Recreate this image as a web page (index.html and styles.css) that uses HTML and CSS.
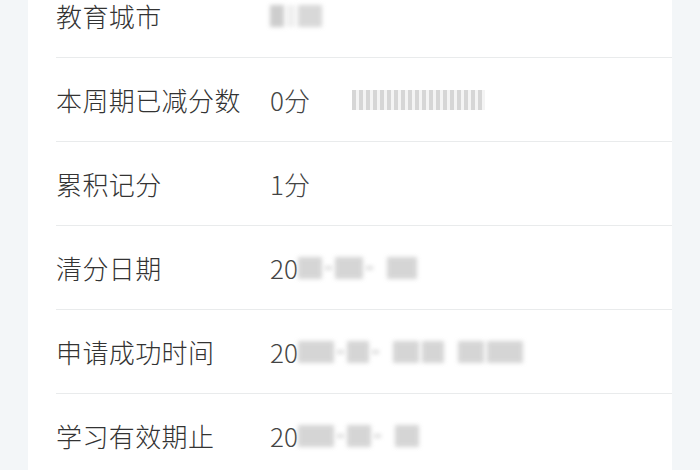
FILE: index.html
```html
<!DOCTYPE html>
<html lang="zh-CN">
<head>
<meta charset="utf-8">
<link rel="stylesheet" href="styles.css">
</head>
<body>
<div class="page">
  <div class="card">
    <div class="list">
      <div class="row">
        <div class="label">教育城市</div>
        <div class="value"><span class="mask"><i class="b b1"></i><i class="b b2"></i><i class="b b3"></i></span></div>
      </div>
      <div class="row">
        <div class="label">本周期已减分数</div>
        <div class="value">0分<span class="stripes"></span></div>
      </div>
      <div class="row">
        <div class="label">累积记分</div>
        <div class="value">1分</div>
      </div>
      <div class="row">
        <div class="label">清分日期</div>
        <div class="value">20<span class="mask"><i class="b s24"></i><i class="b sdash"></i><i class="b s28"></i><i class="b sdash"></i><i class="b gap"></i><i class="b s30"></i></span></div>
      </div>
      <div class="row">
        <div class="label">申请成功时间</div>
        <div class="value">20<span class="mask"><i class="b s36"></i><i class="b sdash"></i><i class="b s22"></i><i class="b sdash"></i><i class="b gap"></i><i class="b s26"></i><i class="b s22"></i><i class="b gap"></i><i class="b s26"></i><i class="b s36"></i></span></div>
      </div>
      <div class="row">
        <div class="label">学习有效期止</div>
        <div class="value">20<span class="mask"><i class="b s36"></i><i class="b sdash"></i><i class="b s24"></i><i class="b sdash"></i><i class="b gap"></i><i class="b s24"></i></span></div>
      </div>
    </div>
  </div>
</div>
</body>
</html>
```
FILE: styles.css
```css
html, body {
  margin: 0;
  padding: 0;
  background: #f3f6f8;
}
body {
  width: 700px;
  height: 470px;
  overflow: hidden;
  font-family: "Noto Sans CJK SC", "Noto Sans", sans-serif;
}
.page {
  display: flex;
  height: 470px;
  padding: 0 28px;
  box-sizing: border-box;
}
.card {
  flex: 1;
  background: #ffffff;
  overflow: hidden;
}
.list {
  margin-top: -26px;
  padding-left: 28px;
}
.row {
  display: flex;
  align-items: center;
  height: 83px;
  border-bottom: 1px solid #e9ebec;
}
.label {
  width: 214px;
  font-size: 26px;
  line-height: 30px;
  font-weight: 300;
  color: #333333;
  letter-spacing: 0.4px;
}
.value {
  display: flex;
  align-items: center;
  font-size: 26px;
  line-height: 30px;
  font-weight: 300;
  color: #444444;
}
.mask {
  display: inline-flex;
  align-items: center;
  gap: 3px;
  height: 28px;
  filter: blur(2px);
  opacity: 0.7;
}
.b {
  display: inline-block;
  height: 22px;
  background: #c4c4c4;
}
.b1 { width: 14px; background: #b8b8b8; }
.b2 { width: 8px; background: #e8e8e8; }
.b3 { width: 24px; background: #c8c8c8; }
.s20 { width: 20px; }
.s22 { width: 22px; }
.s24 { width: 24px; }
.s26 { width: 26px; }
.s28 { width: 28px; }
.s30 { width: 30px; }
.s34 { width: 34px; }
.s36 { width: 36px; }
.gap { width: 8px; background: transparent; }
.sdash { width: 7px; height: 4px; background: #cfcfcf; }
.stripes {
  display: inline-block;
  margin-left: 42px;
  width: 133px;
  height: 20px;
  background: repeating-linear-gradient(90deg, #d6d6d6 0 4px, #f4f4f4 4px 7px);
  filter: blur(0.5px);
}
```
